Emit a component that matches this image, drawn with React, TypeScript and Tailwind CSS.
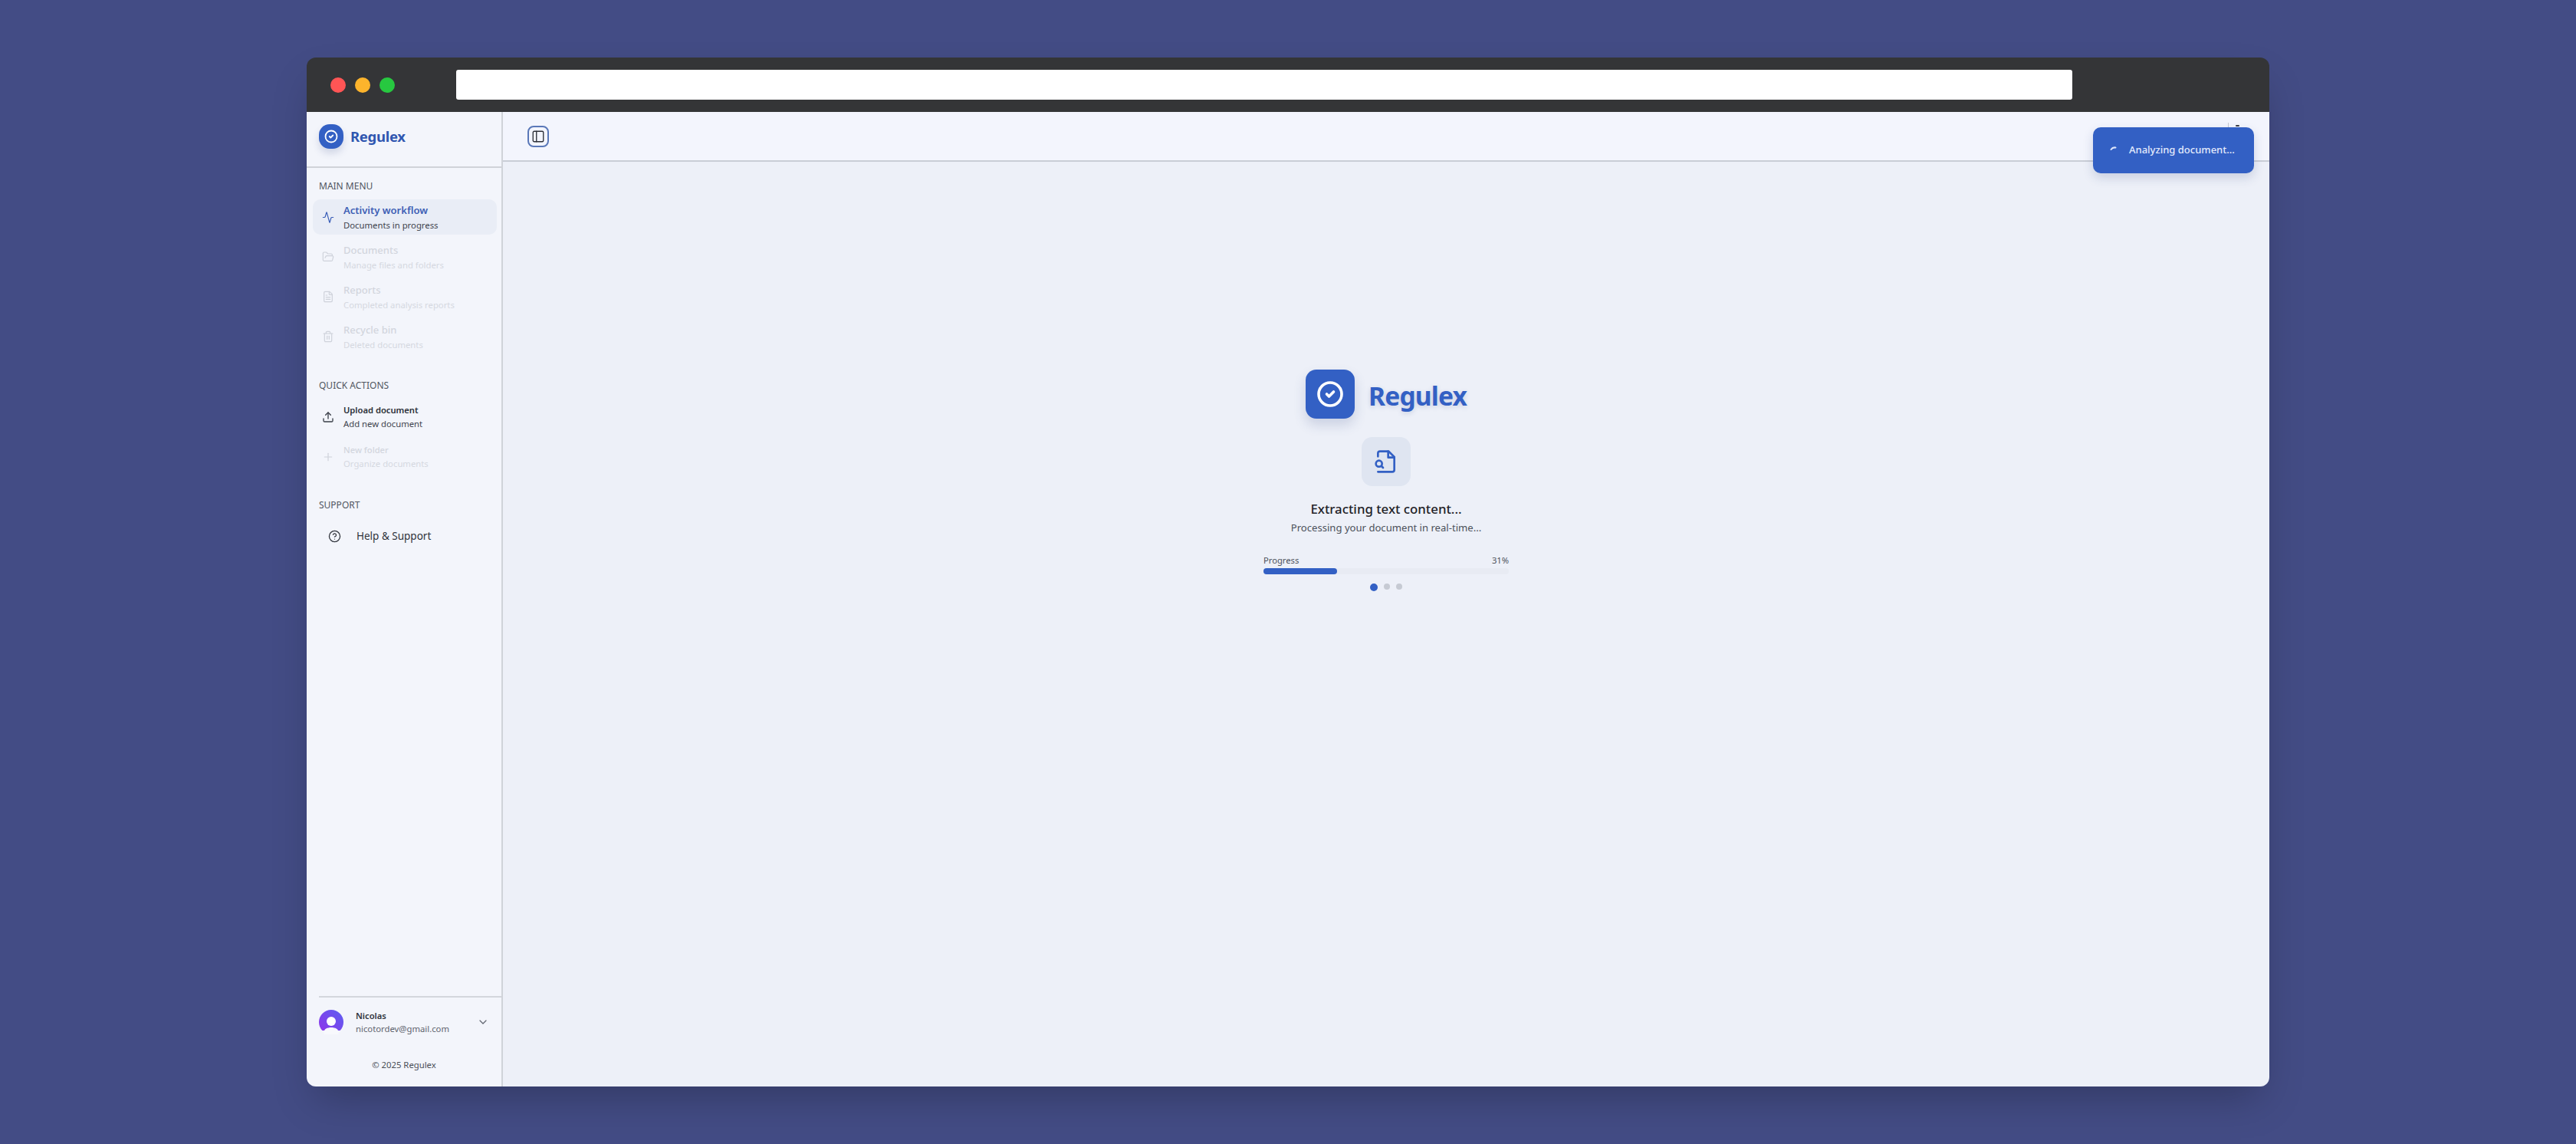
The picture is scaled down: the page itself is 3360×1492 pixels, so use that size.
import { Activity, FolderOpen, FileText, Trash2, Upload, Plus, CircleHelp, ChevronDown, PanelLeft, CircleCheck } from "lucide-react";
import type { ReactNode } from "react";

function NavItem({ icon, title, sub, active, disabled, compact }: { icon: ReactNode; title: string; sub: string; active?: boolean; disabled?: boolean; compact?: boolean }) {
  return (
    <div className={`flex items-center gap-[12px] rounded-[10px] pl-[12px] pr-2 w-[240px] h-[46px] ${active ? "bg-[#e9edf6]" : ""} ${disabled ? "opacity-40" : ""}`}>
      <div className={`w-[16px] flex justify-center shrink-0 ${disabled ? "text-[#9aa0ac]" : active ? "text-[#3b5fb8]" : "text-[#3a3f48]"}`}>{icon}</div>
      <div className={`flex flex-col ${compact ? "" : "pt-[1px]"}`}>
        <span className={`${compact ? "text-[11.2px] leading-[18px]" : "text-[13px] leading-[20px]"} ${active ? "font-semibold text-[#3d5fb5]" : disabled ? "font-medium text-[#a2a7b2]" : "font-semibold text-[#2a2e36]"}`}>{title}</span>
        <span className={`text-[11.3px] ${compact ? "leading-[18px]" : "leading-[20px]"} ${disabled ? "text-[#a9aeb8]" : "text-[#3f444e]"}`}>{sub}</span>
      </div>
    </div>
  );
}

function SectionLabel({ children }: { children: ReactNode }) {
  return <div className="text-[12px] leading-[16px] text-[#50555f] pl-[8px]">{children}</div>;
}

export default function App() {
  return (
    <div className="h-[1492px] w-[3360px] bg-[#434c85] flex items-center justify-center" style={{ fontFamily: '"Noto Sans", "Open Sans", sans-serif' }}>
      <div className="relative w-[2560px] h-[1342px] rounded-[12px] overflow-hidden flex flex-col shadow-2xl">
        {/* browser chrome */}
        <div className="h-[71px] bg-[#343537] shrink-0 flex items-center pl-[31px] pr-[257px]">
          <div className="flex gap-[12px] shrink-0">
            <div className="w-[20px] h-[20px] rounded-full bg-[#ff5555]" />
            <div className="w-[20px] h-[20px] rounded-full bg-[#fdb42c]" />
            <div className="w-[20px] h-[20px] rounded-full bg-[#27c840]" />
          </div>
          <div className="ml-[80px] flex-1 h-[39px] bg-white rounded-[3px]" />
        </div>

        <div className="flex-1 flex min-h-0">
          {/* sidebar */}
          <aside className="w-[256px] shrink-0 bg-[#f3f5fb] border-r-2 border-[#d0d3d9] flex flex-col">
            <div className="h-[73px] shrink-0 border-b-2 border-[#d0d3d9] flex items-start pt-[16px] pl-[16px] gap-[9px]">
              <div className="w-[32px] h-[32px] rounded-[14px] bg-[#3360c4] flex items-center justify-center text-white shadow-[0_6px_10px_rgba(60,80,140,0.18)]">
                <CircleCheck size={18} strokeWidth={2.4} />
              </div>
              <span className="text-[18.500px] font-bold leading-[32px] tracking-[-0.3px] text-[#2f56b0]">Regulex</span>
            </div>

            <div className="pt-[16px] px-[8px] flex flex-col">
              <SectionLabel>MAIN MENU</SectionLabel>
              <div className="mt-[9px] flex flex-col gap-[6px]">
                <NavItem active icon={<Activity size={17} strokeWidth={1.8} />} title="Activity workflow" sub="Documents in progress" />
                <NavItem disabled icon={<FolderOpen size={18} strokeWidth={1.8} />} title="Documents" sub="Manage files and folders" />
                <NavItem disabled icon={<FileText size={18} strokeWidth={1.8} />} title="Reports" sub="Completed analysis reports" />
                <NavItem disabled icon={<Trash2 size={18} strokeWidth={1.8} />} title="Recycle bin" sub="Deleted documents" />
              </div>
              <div className="mt-[33px]">
                <SectionLabel>QUICK ACTIONS</SectionLabel>
              </div>
              <div className="mt-[10px] flex flex-col gap-[6px]">
                <NavItem compact icon={<Upload size={18} strokeWidth={2} />} title="Upload document" sub="Add new document" />
                <NavItem compact disabled icon={<Plus size={18} strokeWidth={1.8} />} title="New folder" sub="Organize documents" />
              </div>
              <div className="mt-[32px]">
                <SectionLabel>SUPPORT</SectionLabel>
              </div>
              <div className="mt-[20px] flex items-center pl-[20px] gap-[20px] h-[24px]">
                <CircleHelp size={17} strokeWidth={1.8} className="text-[#30343c]" />
                <span className="text-[13.500px] text-[#30343c]">Help &amp; Support</span>
              </div>
            </div>

            <div className="flex-1" />

            <div className="ml-[16px] border-t-2 border-[#d3d6dc] h-[118px] shrink-0 flex flex-col">
              <div className="flex items-center pt-[15px] gap-[16px]">
                <svg width="32" height="32" viewBox="0 0 32 32" className="shrink-0">
                  <defs>
                    <linearGradient id="av" x1="0" y1="1" x2="1" y2="0">
                      <stop offset="0" stopColor="#9333ea" />
                      <stop offset="1" stopColor="#5b5ff0" />
                    </linearGradient>
                  </defs>
                  <circle cx="16" cy="16" r="16" fill="url(#av)" />
                  <rect x="0" y="27" width="32" height="5" fill="#f3f5fb" />
                  <circle cx="16" cy="15" r="6" fill="#fff" />
                  <path d="M6.500 32V29C6.500 25 11 23 16 23s9.500 2 9.500 6v3z" fill="#f8f9fd" />
                </svg>
                <div className="flex flex-col flex-1">
                  <span className="text-[11.200px] leading-[17px] font-semibold text-[#2f333b]">Nicolas</span>
                  <span className="text-[11.300px] leading-[17px] text-[#5f646e]">nicotordev@gmail.com</span>
                </div>
                <ChevronDown size={16} strokeWidth={1.8} className="text-[#5f646e] mr-[16px]" />
              </div>
              <div className="mt-[31px] text-center text-[11.300px] leading-[16px] text-[#4a4f58] pr-[16px]">© 2025 Regulex</div>
            </div>
          </aside>

          {/* main */}
          <main className="relative flex-1 bg-[#edf0f8] flex flex-col">
            <div className="h-[65px] shrink-0 bg-[#f3f5fd] border-b-2 border-[#c9cdd6] pl-[32px] flex items-start pt-[18px]">
              <div className="w-[28px] h-[28px] rounded-[8px] border-2 border-[#5a78b8] flex items-center justify-center text-[#2d3038]">
                <PanelLeft size={18} strokeWidth={1.8} />
              </div>
            </div>
            <div className="flex flex-col items-center pt-[271px]">
              <div className="flex items-center gap-[18px]">
                <div className="w-[64px] h-[64px] rounded-[14px] bg-[#3360c4] flex items-center justify-center text-white shadow-[0_8px_16px_rgba(60,80,140,0.2)]">
                  <CircleCheck size={36} strokeWidth={2.4} />
                </div>
                <span className="pt-[4px] text-[33.500px] leading-[50px] font-bold tracking-[-0.8px] text-[#3360c4] [text-shadow:0_2px_6px_rgba(60,80,140,0.2)]">Regulex</span>
              </div>
              <div className="mt-[24px] w-[64px] h-[64px] rounded-[14px] bg-[#dfe5f1] flex items-center justify-center text-[#3360c4]">
                <svg width="32" height="32" viewBox="0 0 24 24" fill="none" stroke="currentColor" strokeWidth="2" strokeLinecap="round" strokeLinejoin="round">
                  <path d="M4 22h14a2 2 0 0 0 2-2V7.500L14.500 2H6a2 2 0 0 0-2 2v3" />
                  <polyline points="14 2 14 8 20 8" />
                  <circle cx="5" cy="14" r="3" />
                  <path d="m9 18-1.500-1.500" />
                </svg>
              </div>
              <div className="mt-[16px] text-[16.800px] leading-[28px] font-medium text-[#1f2228]">Extracting text content...</div>
              <div className="text-[13.100px] leading-[20px] text-[#4c515b]">Processing your document in real-time...</div>
              <div className="mt-[24px] w-[320px] flex flex-col">
                <div className="flex justify-between text-[11.200px] leading-[18px] text-[#4c515b]">
                  <span>Progress</span>
                  <span>31%</span>
                </div>
                <div className="mt-[1px] h-[8px] rounded-full bg-[#e8ebf3]">
                  <div className="h-full rounded-full bg-[#3360c4]" style={{ width: "30%" }} />
                </div>
              </div>
              <div className="mt-[12px] flex items-center gap-[8px] pr-[1px]">
                <div className="w-[10px] h-[10px] rounded-full bg-[#3360c4]" />
                <div className="w-[8px] h-[8px] rounded-full bg-[#c6cad3] -mt-[2px]" />
                <div className="w-[8px] h-[8px] rounded-full bg-[#c6cad3] -mt-[2px]" />
              </div>
            </div>
            {/* bits of the header controls peeking out above the toast */}
            <div className="absolute left-[2250px] top-[14px] w-[1px] h-[8px] bg-[#c4c8d2]" />
            <div className="absolute left-[2260px] top-[17px] w-[5px] h-[2px] rounded-full bg-[#3a3d45]" />
          </main>
        </div>

        {/* toast */}
        <div className="absolute left-[2330px] top-[91px] w-[210px] h-[60px] rounded-[10px] bg-[#3360c4] flex items-center pl-[22px] shadow-[0_6px_14px_rgba(40,60,120,0.18)]">
          <svg width="16" height="16" viewBox="0 0 16 16" className="shrink-0">
            <path d="M1.500 7A6 6 0 0 1 7.500 4.500" fill="none" stroke="#dfe7fb" strokeWidth="2" strokeLinecap="round" />
          </svg>
          <span className="ml-[9px] text-[13px] font-medium text-[#e4ebfc]">Analyzing document...</span>
        </div>
      </div>
    </div>
  );
}
